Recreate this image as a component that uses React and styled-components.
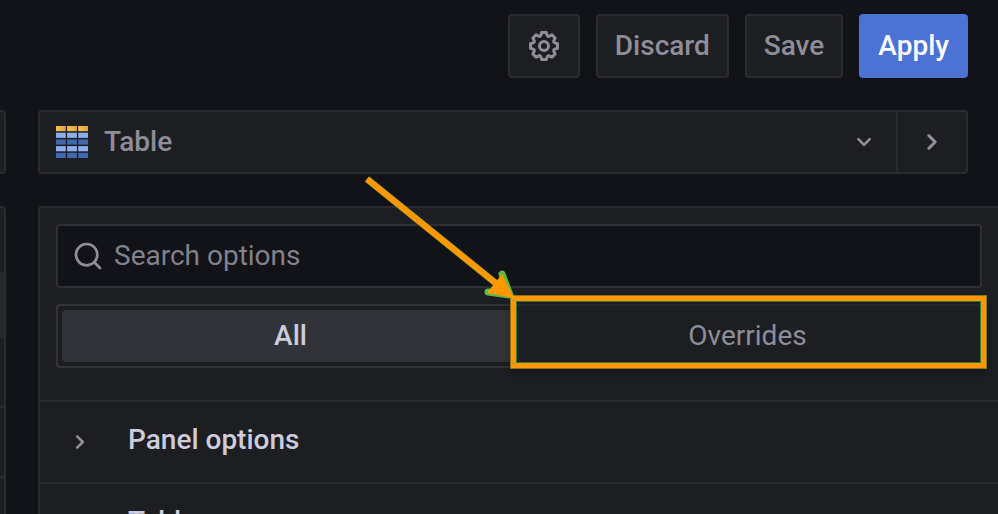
import React, { useState } from "react";
import styled, { createGlobalStyle } from "styled-components";

const tableRows = ["url(#tableHead)", "#8aaeee", "#3f68ae", "#8aaeee", "#3f68ae"];

const App = () => {
  const [tab, setTab] = useState("all");

  return (
    <>
      <GlobalStyle />
      <Page>
        <Toolbar>
          <IconButton type="button" aria-label="Settings">
            <CogIcon />
          </IconButton>
          <Button type="button">Discard</Button>
          <Button type="button">Save</Button>
          <Button type="button" $primary>Apply</Button>
        </Toolbar>
        <Content>
          <Preview>
            <PreviewHeader />
            <PreviewBody>
              <PreviewRow $height="64px" />
              <PreviewRow $height="66px" $active />
              <PreviewRow $height="70px" $line />
              <PreviewRow $height="70px" $line />
            </PreviewBody>
          </Preview>
          <Options>
            <Picker>
              <PickerButton type="button">
                <TableIcon />
                <PickerName>Table</PickerName>
                <AngleDown />
              </PickerButton>
              <ToggleButton type="button" aria-label="Collapse options">
                <AngleRight size={36} />
              </ToggleButton>
            </Picker>
            <Pane>
              <PaneHeader>
                <Search>
                  <SearchIcon />
                  <SearchInput type="text" placeholder="Search options" aria-label="Search options" />
                </Search>
                <RadioGroup>
                  <Radio $active={tab === "all"}>
                    <RadioInput type="radio" name="tab" checked={tab === "all"} onChange={() => setTab("all")} />
                    <RadioText>All</RadioText>
                  </Radio>
                  <Radio $active={tab === "overrides"}>
                    <Highlight />
                    <Arrow />
                    <RadioInput type="radio" name="tab" checked={tab === "overrides"} onChange={() => setTab("overrides")} />
                    <RadioText>Overrides</RadioText>
                  </Radio>
                </RadioGroup>
              </PaneHeader>
              <Section type="button">
                <AngleRight size={32} />
                <SectionTitle>Panel options</SectionTitle>
              </Section>
              <Section type="button">
                <AngleRight size={32} />
                <SectionTitle>Table</SectionTitle>
              </Section>
            </Pane>
          </Options>
        </Content>
      </Page>
    </>
  );
};

const CogIcon = () => (
  <Icon width="36" height="36" viewBox="0 0 24 24">
    <path d="M21.32,9.55l-1.89-.63.89-1.78A1,1,0,0,0,20.13,6L18,3.87a1,1,0,0,0-1.15-.19l-1.78.89-.63-1.89A1,1,0,0,0,13.5,2h-3a1,1,0,0,0-.95.68L8.92,4.57,7.14,3.68A1,1,0,0,0,6,3.87L3.87,6a1,1,0,0,0-.19,1.15l.89,1.78-1.89.63A1,1,0,0,0,2,10.5v3a1,1,0,0,0,.68.95l1.89.63-.89,1.78A1,1,0,0,0,3.87,18L6,20.13a1,1,0,0,0,1.15.19l1.78-.89.63,1.89a1,1,0,0,0,.95.68h3a1,1,0,0,0,.95-.68l.63-1.89,1.78.89A1,1,0,0,0,18,20.13L20.13,18a1,1,0,0,0,.19-1.15l-.89-1.78,1.89-.63A1,1,0,0,0,22,13.5v-3A1,1,0,0,0,21.32,9.55ZM20,12.78l-1.2.4A2,2,0,0,0,17.64,16l.57,1.14-1.1,1.1L16,17.64a2,2,0,0,0-2.79,1.16l-.4,1.2H11.22l-.4-1.2A2,2,0,0,0,8,17.64l-1.14.57-1.1-1.1L6.36,16A2,2,0,0,0,5.2,13.18L4,12.78V11.22l1.2-.4A2,2,0,0,0,6.36,8L5.79,6.89l1.1-1.1L8,6.36A2,2,0,0,0,10.82,5.2l.4-1.2h1.56l.4,1.2A2,2,0,0,0,16,6.36l1.14-.57,1.1,1.1L17.64,8a2,2,0,0,0,1.16,2.79l1.2.4ZM12,8a4,4,0,1,0,4,4A4,4,0,0,0,12,8Zm0,6a2,2,0,1,1,2-2A2,2,0,0,1,12,14Z" />
  </Icon>
);

const SearchIcon = () => (
  <Icon width="32" height="32" viewBox="0 0 24 24">
    <path d="M21.71,20.29,18,16.61A9,9,0,1,0,16.61,18l3.68,3.68a1,1,0,0,0,1.42,0A1,1,0,0,0,21.71,20.29ZM11,18a7,7,0,1,1,7-7A7,7,0,0,1,11,18Z" />
  </Icon>
);

const AngleDown = () => (
  <Icon width="32" height="32" viewBox="0 0 24 24">
    <path d="M17,9.17a1,1,0,0,0-1.41,0L12,12.71,8.46,9.17a1,1,0,0,0-1.41,0,1,1,0,0,0,0,1.42l4.24,4.24a1,1,0,0,0,1.42,0L17,10.59A1,1,0,0,0,17,9.17Z" />
  </Icon>
);

const AngleRight = ({ size }) => (
  <Icon width={size} height={size} viewBox="0 0 24 24">
    <path d="M14.83,11.29,10.59,7.05a1,1,0,0,0-1.42,0,1,1,0,0,0,0,1.41L12.71,12,9.17,15.54a1,1,0,0,0,0,1.41,1,1,0,0,0,.71.29,1,1,0,0,0,.71-.29l4.24-4.24A1,1,0,0,0,14.83,11.29Z" />
  </Icon>
);

const TableIcon = () => (
  <Icon width="32" height="32" viewBox="0 0 32 32">
    <defs>
      <linearGradient id="tableHead">
        <stop offset="0" stopColor="#ecc843" />
        <stop offset="1" stopColor="#ee9c4a" />
      </linearGradient>
    </defs>
    {tableRows.map((fill, row) =>
      [0, 11.1, 22.2].map((x) => (
        <rect key={`${row}-${x}`} x={x} y={row * 6.7} width="9.8" height="5.2" fill={fill} />
      ))
    )}
  </Icon>
);

const Arrow = () => (
  <ArrowSvg width="160" height="130" viewBox="360 172 160 130" aria-hidden="true">
    <path d="M502 274L510 295L488 292" fill="none" stroke="#5fb944" strokeWidth="7" strokeLinecap="round" strokeLinejoin="round" />
    <path d="M367 179L498 285" stroke="#5f8a2c" strokeWidth="7" />
    <path d="M367 179L498 285" stroke="#ff9800" strokeWidth="6" />
    <path d="M502 274L514 298L487 293Z" fill="#ff9800" />
  </ArrowSvg>
);

const GlobalStyle = createGlobalStyle`
  * {
    box-sizing: border-box;
  }
  body {
    margin: 0;
    background: #121318;
    color: #8e8d99;
    font-family: Roboto, "Liberation Sans", sans-serif;
    font-size: 28px;
    line-height: 32px;
  }
  button, input {
    font: inherit;
    color: inherit;
  }
`;

const Page = styled.div`
  display: flex;
  flex-direction: column;
  height: 100vh;
  overflow: hidden;
`;

const Icon = styled.svg`
  display: block;
  flex: none;
  fill: #8e8d99;
`;

const Toolbar = styled.header`
  display: flex;
  justify-content: flex-end;
  gap: 16px;
  padding: 14px 30px 32px;
`;

const Button = styled.button`
  height: 64px;
  padding: 0 17px;
  border: 2px solid ${({ $primary }) => ($primary ? "#4c72d5" : "#2a2b30")};
  border-radius: 4px;
  background: ${({ $primary }) => ($primary ? "#4c72d5" : "#1d1e22")};
  color: ${({ $primary }) => ($primary ? "#ffffff" : "#8e8d99")};
  font-weight: 500;
  cursor: pointer;
`;

const IconButton = styled(Button)`
  display: flex;
  align-items: center;
  padding: 0 16px;
`;

const Content = styled.main`
  display: flex;
  gap: 32px;
  flex: 1;
  min-height: 0;
`;

const Preview = styled.div`
  display: flex;
  flex-direction: column;
  gap: 32px;
  width: 6px;
`;

const PreviewHeader = styled.div`
  height: 64px;
  border: 2px solid #2a2b30;
  border-left: 0;
  border-radius: 0 4px 4px 0;
  background: #1d1e22;
`;

const PreviewBody = styled.div`
  flex: 1;
  border: 2px solid #2a2b30;
  border-width: 2px 2px 0 0;
  border-radius: 0 4px 0 0;
  background: #1d1e22;
`;

const PreviewRow = styled.div`
  height: ${({ $height }) => $height};
  border-bottom: ${({ $line }) => ($line ? "2px solid #2a2b30" : "0")};
  background: ${({ $active }) => ($active ? "#28292d" : "transparent")};
`;

const Options = styled.div`
  display: flex;
  flex-direction: column;
  gap: 32px;
  flex: 1;
  min-width: 0;
`;

const Picker = styled.div`
  display: flex;
  height: 64px;
  margin-right: 30px;
  border: 2px solid #2a2b30;
  border-radius: 4px;
  background: #1d1e22;
`;

const PickerButton = styled.button`
  display: flex;
  align-items: center;
  gap: 16px;
  flex: 1;
  padding: 0 16px;
  border: 0;
  background: none;
  font-weight: 500;
  text-align: left;
  cursor: pointer;
`;

const PickerName = styled.span`
  flex: 1;
`;

const ToggleButton = styled.button`
  display: flex;
  align-items: center;
  padding: 0 16px;
  border: 0;
  border-left: 2px solid #2a2b30;
  background: none;
  cursor: pointer;
`;

const Pane = styled.section`
  flex: 1;
  min-height: 0;
  border: 2px solid #2a2b30;
  border-width: 2px 0 0 2px;
  border-radius: 4px 0 0 0;
  background: #1d1e22;
`;

const PaneHeader = styled.div`
  display: flex;
  flex-direction: column;
  gap: 16px;
  padding: 16px 16px 32px;
`;

const Search = styled.div`
  display: flex;
  align-items: center;
  gap: 10px;
  height: 64px;
  padding: 0 14px;
  border: 2px solid #2e2f34;
  border-radius: 4px;
  background: #121318;
`;

const SearchInput = styled.input`
  flex: 1;
  min-width: 0;
  padding: 0;
  border: 0;
  outline: none;
  background: none;

  &::placeholder {
    color: #82818c;
    opacity: 1;
  }
`;

const RadioGroup = styled.div`
  display: flex;
  height: 64px;
  padding: 4px;
  border: 2px solid #333439;
  border-radius: 4px;
`;

const Radio = styled.label`
  position: relative;
  display: flex;
  align-items: center;
  justify-content: center;
  flex: 1;
  border-radius: 4px;
  background: ${({ $active }) => ($active ? "#323338" : "transparent")};
  color: ${({ $active }) => ($active ? "#ccccdc" : "#8e8d99")};
  font-weight: ${({ $active }) => ($active ? 500 : 400)};
  cursor: pointer;
`;

const RadioInput = styled.input`
  position: absolute;
  inset: 0;
  margin: 0;
  opacity: 0;
  cursor: pointer;
`;

const RadioText = styled.span`
  position: relative;
`;

/* orange frame around the second tab */
const Highlight = styled.span`
  position: absolute;
  inset: -14px -10px -6px -8px;
  border: 5px solid #ff9800;
  background: rgba(29, 30, 34, 0.6);
  box-shadow: 0 0 0 1px #8a7416, inset 0 0 0 1px #35763a, 0 4px 8px rgba(0, 0, 0, 0.3);
`;

const ArrowSvg = styled.svg`
  position: absolute;
  top: -138px;
  left: -159px;
  pointer-events: none;
`;

const Section = styled.button`
  display: flex;
  align-items: center;
  gap: 32px;
  width: 100%;
  height: 82px;
  padding: 0 24px;
  border: 0;
  border-top: 2px solid #2a2b30;
  background: none;
  color: #ccccdc;
  font-weight: 500;
  cursor: pointer;
`;

const SectionTitle = styled.span`
  padding-bottom: 4px;
`;

export default App;
